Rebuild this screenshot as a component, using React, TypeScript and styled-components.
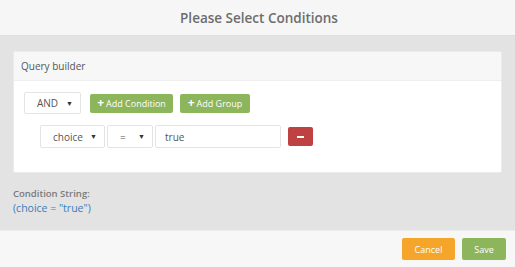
import { createGlobalStyle } from "styled-components";
import styled from "styled-components";

const GlobalStyle = createGlobalStyle`
  html, body {
    margin: 0;
    padding: 0;
    background: #e3e3e3;
  }
  body {
    font-family: "Open Sans", "Liberation Sans", sans-serif;
  }
`;

const Modal = styled.div`
  display: flex;
  flex-direction: column;
  width: 515px;
  height: 267px;
  overflow: hidden;
`;

const Header = styled.div`
  flex: 0 0 35px;
  display: flex;
  align-items: center;
  justify-content: center;
  background: #f6f6f6;
  border-bottom: 1px solid #dedede;
`;

const Title = styled.h4`
  margin: 0;
  font-size: 13.5px;
  font-weight: 600;
  color: #6d6d6d;
  padding-left: 3px;
`;

const Body = styled.div`
  flex: 1;
  background: #e3e3e3;
  padding: 15px 13px 0 13px;
`;

const Panel = styled.div`
  background: #fff;
  border: 1px solid #ececec;
  border-radius: 2px;
`;

const PanelHeading = styled.div`
  height: 28px;
  display: flex;
  align-items: center;
  padding-left: 7px;
  background: #f7f7f7;
  border-bottom: 1px solid #eee;
  font-size: 10px;
  color: #555;
`;

const PanelBody = styled.div`
  padding: 11px 10px 24px 10px;
  display: flex;
  flex-direction: column;
  gap: 11px;
`;

const Row = styled.div<{ $indent?: number }>`
  display: flex;
  align-items: center;
  margin-left: ${(p) => p.$indent ?? 0}px;
`;

const Select = styled.div<{ $w: number; $h?: number }>`
  box-sizing: border-box;
  width: ${(p) => p.$w}px;
  height: ${(p) => p.$h ?? 23}px;
  display: flex;
  align-items: center;
  justify-content: space-between;
  padding: 0 7px 0 12px;
  border: 1px solid #e4e4e4;
  border-radius: 2px;
  background: #fff;
  font-size: 10px;
  color: #555;
  margin-right: 2px;
`;

const Caret = styled.span`
  font-size: 7px;
  color: #333;
`;

const TextInput = styled.div`
  box-sizing: border-box;
  width: 126px;
  height: 23px;
  display: flex;
  align-items: center;
  padding-left: 9px;
  border: 1px solid #e4e4e4;
  border-radius: 2px;
  font-size: 10px;
  color: #555;
`;

const Btn = styled.div<{ $bg: string; $w: number; $h: number }>`
  box-sizing: border-box;
  width: ${(p) => p.$w}px;
  height: ${(p) => p.$h}px;
  display: flex;
  align-items: center;
  justify-content: center;
  gap: 2px;
  background: ${(p) => p.$bg};
  border-radius: 2px;
  color: #fff;
  font-size: 9px;
  margin-left: 7px;
  white-space: nowrap;
`;

const Plus = styled.span`
  font-size: 12px;
  font-weight: 700;
  line-height: 1;
  margin-top: -1px;
`;

const Minus = styled.span`
  display: block;
  width: 7px;
  height: 2px;
  background: #fff;
`;

const ConditionBlock = styled.div`
  padding-top: 14px;
`;

const ConditionLabel = styled.div`
  font-size: 9.5px;
  font-weight: 600;
  color: #7a7a7a;
  line-height: 14px;
`;

const ConditionValue = styled.div`
  font-size: 10.5px;
  color: #3a7db8;
  line-height: 15px;
`;

const Footer = styled.div`
  flex: 0 0 36px;
  display: flex;
  align-items: center;
  justify-content: flex-end;
  padding-right: 9px;
  background: #f7f7f7;
  border-top: 1px solid #ececec;
`;

export default function App() {
  return (
    <>
      <GlobalStyle />
      <Modal>
        <Header>
          <Title>Please Select Conditions</Title>
        </Header>
        <Body>
          <Panel>
            <PanelHeading>Query builder</PanelHeading>
            <PanelBody>
              <Row>
                <Select $w={57} $h={22}>
                  <span>AND</span>
                  <Caret>▼</Caret>
                </Select>
                <Btn $bg="#8cb55c" $w={83} $h={19}>
                  <Plus>+</Plus>
                  <span>Add Condition</span>
                </Btn>
                <Btn $bg="#8cb55c" $w={70} $h={19}>
                  <Plus>+</Plus>
                  <span>Add Group</span>
                </Btn>
              </Row>
              <Row $indent={16}>
                <Select $w={65}>
                  <span>choice</span>
                  <Caret>▼</Caret>
                </Select>
                <Select $w={46}>
                  <span>=</span>
                  <Caret>▼</Caret>
                </Select>
                <TextInput>true</TextInput>
                <Btn $bg="#be4242" $w={25} $h={19}>
                  <Minus />
                </Btn>
              </Row>
            </PanelBody>
          </Panel>
          <ConditionBlock>
            <ConditionLabel>Condition String:</ConditionLabel>
            <ConditionValue>(choice = "true")</ConditionValue>
          </ConditionBlock>
        </Body>
        <Footer>
          <Btn $bg="#f5a52a" $w={53} $h={22}>Cancel</Btn>
          <Btn $bg="#8cb55c" $w={44} $h={22}>Save</Btn>
        </Footer>
      </Modal>
    </>
  );
}
